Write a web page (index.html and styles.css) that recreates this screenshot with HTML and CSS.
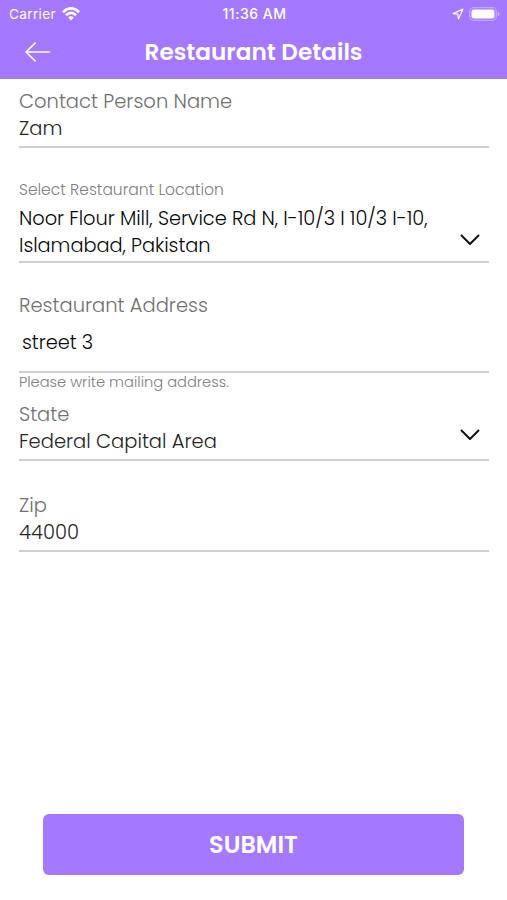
FILE: index.html
```html
<!DOCTYPE html>
<html lang="en">
<head>
<meta charset="utf-8">
<meta name="viewport" content="width=device-width, initial-scale=1">
<title>Restaurant Details</title>
<link rel="stylesheet" href="styles.css">
</head>
<body>
<div class="screen">
  <header class="header">
    <div class="status">
      <div class="carrier"><span class="carrier-name">Carrier</span>
        <svg class="wifi" width="18" height="14" viewBox="0 0 18 14" fill="none" stroke="#fff" stroke-width="2.6"><path d="M.9 5.2Q9-2.4 17.1 5.2M3.9 8.3Q9 3.6 14.1 8.3"/><path d="M6.2 10.5Q9 8.1 11.8 10.5L9 13.4Z" fill="#fff" stroke="none"/></svg>
      </div>
      <span class="time">11:36 AM</span>
      <div class="indicators">
        <svg width="12" height="12" viewBox="0 0 12 12" fill="none" stroke="#fff" stroke-width="1.2" stroke-linejoin="round"><path d="M11 1 1 5.6 5.8 6.2 6.4 11Z"/></svg>
        <svg width="31" height="14" viewBox="0 0 31 14"><rect x=".7" y=".7" width="26.6" height="12.6" rx="4" fill="none" stroke="#fff" stroke-opacity=".35" stroke-width="1.3"/><rect x="2.5" y="2.5" width="23" height="9" rx="2.3" fill="#fff"/><path d="M28.8 4.7Q30.6 5.4 30.6 7T28.8 9.3Z" fill="#fff" fill-opacity=".45"/></svg>
      </div>
    </div>
    <div class="navbar">
      <svg class="back" width="26" height="20" viewBox="0 0 26 20" fill="none" stroke="#fff" stroke-width="1.7" stroke-linecap="round" stroke-linejoin="round"><path d="M10.2 1 1 10l9.2 9M1 10h23.5"/></svg>
      <h1 class="title">Restaurant Details</h1>
    </div>
  </header>
  <main class="form">
    <section class="field contact"><div class="label">Contact Person Name</div><div class="value">Zam</div></section>
    <section class="field location"><div class="label small">Select Restaurant Location</div>
      <div class="value dark">Noor Flour Mill, Service Rd N, I-10/3 I 10/3 I-10,<br>Islamabad, Pakistan</div>
      <svg class="chevron" width="20" height="12" viewBox="0 0 20 12"><path d="m1.5 1.5 8.5 8.5 8.5-8.5"/></svg></section>
    <section class="field address"><div class="label">Restaurant Address</div><div class="value dark street">street 3</div></section>
    <div class="label small hint">Please write mailing address.</div>
    <section class="field state"><div class="label">State</div><div class="value">Federal Capital Area</div>
      <svg class="chevron" width="20" height="12" viewBox="0 0 20 12"><path d="m1.5 1.5 8.5 8.5 8.5-8.5"/></svg></section>
    <section class="field zip"><div class="label">Zip</div><div class="value">44000</div></section>
  </main>
  <button class="submit" type="button">SUBMIT</button>
</div>
</body>
</html>
```
FILE: styles.css
```css
* { box-sizing: border-box; }
body { margin: 0; background: #fff; font-family: Poppins, Inter, sans-serif; }
.screen { height: 900px; display: flex; flex-direction: column; }
.header { height: 79px; background: #a478ff; color: #fff; }
.status { height: 27px; display: grid; grid-template-columns: 1fr auto 1fr; align-items: center; padding: 0 7px 0 9px; font: 13.6px Inter, sans-serif; }
.carrier { display: flex; align-items: center; gap: 6px; }
.carrier-name { letter-spacing: .35px; }
.time { font-size: 14px; font-weight: 500; letter-spacing: .5px; }
.indicators { display: flex; align-items: center; justify-content: flex-end; gap: 5px; }
.navbar { height: 50px; display: grid; grid-template-columns: 60px 1fr 60px; align-items: center; }
.back { margin-left: 25px; }
.title { margin: 0; text-align: center; font-size: 23.2px; font-weight: 600; white-space: nowrap; }
.form { padding: 0 18px 0 19px; flex: 1; }
.field { position: relative; border-bottom: 2px solid #d0d0d0; }
.label, .value { font-size: 19.5px; line-height: 27px; font-weight: 300; white-space: nowrap; }
.label { color: #707070; }
.value { color: #252525; }
.value.dark { color: #080808; font-size: 19.4px; letter-spacing: -.06px; }
.label.small { font-size: 15.55px; color: #808080; }
.contact { height: 69px; padding-top: 9px; }
.location { height: 115px; padding-top: 28px; }
.location .value { margin-top: 2px; }
.address { height: 110px; padding-top: 29px; }
.street { margin-top: 10px; padding-left: 3px; }
.label.hint { height: 18px; line-height: 18px; font-size: 14.65px; }
.state { height: 70px; padding-top: 10px; }
.zip { height: 91px; padding-top: 31px; }
.chevron { position: absolute; right: 9px; bottom: 15px; fill: none; stroke: #111; stroke-width: 2; stroke-linecap: round; stroke-linejoin: round; }
.state .chevron { bottom: 18px; }
.submit { width: 421px; height: 61px; margin: 0 0 25px 43px; padding: 0; border: 0; border-radius: 6px; background: #a478ff; color: #fff; font: 600 24px Poppins, Inter, sans-serif; }
```
